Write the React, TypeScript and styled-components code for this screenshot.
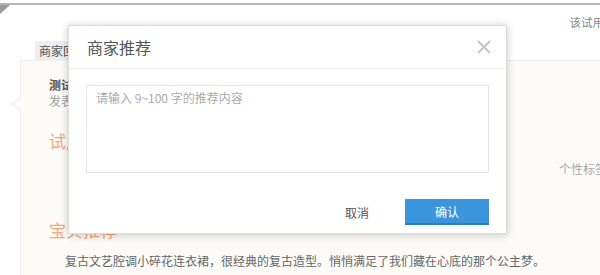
import React from 'react';
import styled, { createGlobalStyle } from 'styled-components';

const GlobalStyle = createGlobalStyle`
  html, body {
    margin: 0;
    padding: 0;
    background: #fff;
    overflow: hidden;
  }
  body {
    font-family: "Microsoft YaHei", "Noto Sans CJK SC", "Noto Sans", sans-serif;
    font-size: 12px;
    color: #666;
  }
`;

const Page = styled.div`
  position: relative;
  width: 600px;
  height: 275px;
  overflow: hidden;
  padding-top: 3px;
  box-sizing: border-box;
`;

const TopBar = styled.div`
  position: relative;
  border-top: 2px solid #b4b4b4;
  height: 36px;
  display: flex;
  justify-content: flex-end;
  align-items: flex-start;
  padding-top: 9px;
  box-sizing: border-box;

  &::before {
    content: '';
    position: absolute;
    left: 0;
    top: 0;
    border-top: 9px solid #9a9a9a;
    border-right: 10px solid transparent;
  }
`;

const TopLink = styled.span`
  color: #888;
  font-size: 11.5px;
  line-height: 16px;
  white-space: nowrap;
  margin-right: -4px;
`;

const TabRow = styled.div`
  display: flex;
  padding-left: 35px;
  margin-top: 2px;
`;

const Tab = styled.div`
  background: #eeeeee;
  color: #555;
  font-size: 12px;
  line-height: 19px;
  padding: 0 6px 0 4px;
  white-space: nowrap;
`;

const Panel = styled.div`
  position: relative;
  margin-left: 20px;
  margin-right: -40px;
  background: #fcfbf8;
  border: 1px solid #efefef;
  padding: 16px 0 30px 28px;

  &::before {
    content: '';
    position: absolute;
    left: -11px;
    top: 36px;
    border-top: 7px solid transparent;
    border-bottom: 7px solid transparent;
    border-right: 10px solid #efefef;
  }
  &::after {
    content: '';
    position: absolute;
    left: -9px;
    top: 37px;
    border-top: 6px solid transparent;
    border-bottom: 6px solid transparent;
    border-right: 9px solid #fcfbf8;
  }
`;

const UserName = styled.div`
  font-weight: bold;
  color: #555;
  line-height: 16px;
`;

const PostMeta = styled.div`
  color: #a0a0a0;
  line-height: 16px;
`;

const SectionTitle = styled.div<{ $gap: number }>`
  color: #f7a67c;
  font-size: 17px;
  line-height: 22px;
  margin-top: ${p => p.$gap}px;
`;

const TagRow = styled.div`
  padding-left: 510px;
  margin-top: 9px;
  color: #aaa;
  line-height: 16px;
  white-space: nowrap;
`;

const Desc = styled.p`
  margin: 11px 0 0 16px;
  font-size: 12px;
  color: #666;
  line-height: 18px;
  white-space: nowrap;
`;

/* dialog layered over the page */
const Dialog = styled.div`
  position: absolute;
  left: 68px;
  top: 25px;
  width: 439px;
  height: 209px;
  background: #fff;
  border: 1px solid #dcdcdc;
  box-sizing: border-box;
  box-shadow: 0 1px 8px rgba(0, 0, 0, 0.22);
  display: flex;
  flex-direction: column;
`;

const DialogHead = styled.div`
  height: 42px;
  border-bottom: 1px solid #eeeeee;
  display: flex;
  align-items: center;
  justify-content: space-between;
  padding: 0 9px 0 18px;
  flex-shrink: 0;
`;

const DialogTitle = styled.h3`
  margin: 0;
  font-size: 16px;
  font-weight: normal;
  color: #555;
`;

const CloseBtn = styled.button`
  width: 26px;
  height: 26px;
  padding: 0;
  border: 0;
  background: none;
  display: flex;
  align-items: center;
  justify-content: center;
  cursor: pointer;
`;

const DialogBody = styled.div`
  padding: 16px 17px 0;
`;

const Textarea = styled.textarea`
  display: block;
  width: 100%;
  height: 88px;
  box-sizing: border-box;
  border: 1px solid #e6e6e6;
  resize: none;
  padding: 3px 9px;
  font-family: inherit;
  font-size: 12px;
  line-height: 18px;
  color: #555;
  outline: none;

  &::placeholder {
    color: #ababab;
  }
`;

const DialogFoot = styled.div`
  display: flex;
  justify-content: flex-end;
  gap: 6px;
  padding: 26px 17px 0;
`;

const Button = styled.button<{ $primary?: boolean }>`
  width: 84px;
  height: 26px;
  border: 0;
  padding: 0;
  font-family: inherit;
  font-size: 12px;
  cursor: pointer;
  background: ${p => (p.$primary ? '#3b95dc' : 'transparent')};
  color: ${p => (p.$primary ? '#fff' : '#555')};
  border-bottom: ${p => (p.$primary ? '2px solid #2a7ec2' : '0')};
`;

export default function App() {
  return (
    <Page>
      <GlobalStyle />
      <TopBar>
        <TopLink>该试用</TopLink>
      </TopBar>
      <TabRow>
        <Tab>商家回应</Tab>
      </TabRow>
      <Panel>
        <UserName>测试用户</UserName>
        <PostMeta>发表于 2014-06-12</PostMeta>
        <SectionTitle $gap={21}>试用心得</SectionTitle>
        <TagRow>个性标签</TagRow>
        <SectionTitle $gap={42}>宝贝推荐</SectionTitle>
        <Desc>复古文艺腔调小碎花连衣裙，很经典的复古造型。悄悄满足了我们藏在心底的那个公主梦。</Desc>
      </Panel>

      <Dialog>
        <DialogHead>
          <DialogTitle>商家推荐</DialogTitle>
          <CloseBtn aria-label="关闭">
            <svg width="14" height="14" viewBox="0 0 14 14">
              <path d="M1 1L13 13M13 1L1 13" stroke="#c2c2c2" strokeWidth="1.8" fill="none" />
            </svg>
          </CloseBtn>
        </DialogHead>
        <DialogBody>
          <Textarea placeholder="请输入 9~100 字的推荐内容" />
        </DialogBody>
        <DialogFoot>
          <Button>取消</Button>
          <Button $primary>确认</Button>
        </DialogFoot>
      </Dialog>
    </Page>
  );
}
